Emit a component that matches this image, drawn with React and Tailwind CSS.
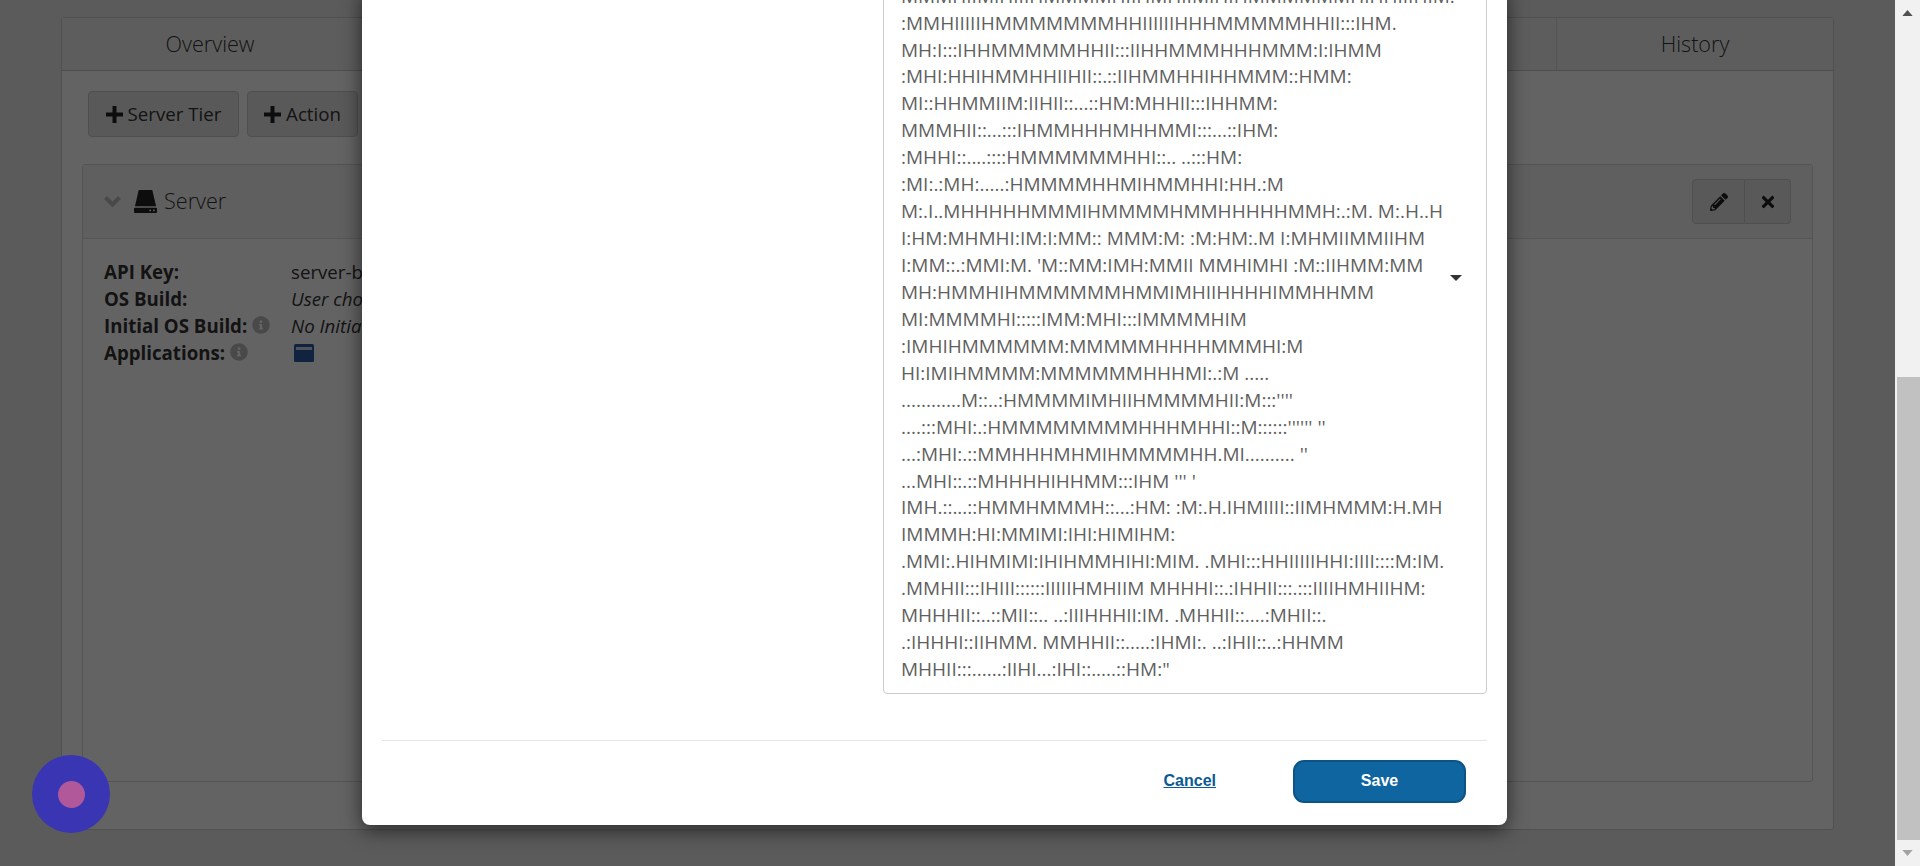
import { FaPencilAlt, FaTimes, FaInfoCircle } from 'react-icons/fa'

const SHEEP = [
  'MMMHIIMIHIIIHMMMMHIIHMHIIMIHIHMMMMMMHIHHIIIHIM:',
  ':MMHIIIIIHMMMMMMMHHIIIIIIHHHMMMMMHHII:::IHM.',
  'MH:I:::IHHMMMMMHHII:::IIHHMMMHHHMMM:I:IHMM',
  ':MHI:HHIHMMHHIIHII::.::IIHMMHHIHHMMM::HMM:',
  'MI::HHMMIIM:IIHII::...::HM:MHHII:::IHHMM:',
  'MMMHII::...:::IHMMHHHMHHMMI:::...::IHM:',
  ':MHHI::....::::HMMMMMMHHI::.. ..:::HM:',
  ':MI:.:MH:.....:HMMMMHHMIHMMHHI:HH.:M',
  'M:.I..MHHHHHMMMIHMMMMHMMHHHHHMMH:.:M. M:.H..H',
  'I:HM:MHMHI:IM:I:MM:: MMM:M: :M:HM:.M I:MHMIIMMIIHM',
  "I:MM::.:MMI:M. 'M::MM:IMH:MMII MMHIMHI :M::IIHMM:MM",
  'MH:HMMHIHMMMMMMHMMIMHIIHHHHIMMHHMM',
  'MI:MMMMHI:::::IMM:MHI:::IMMMMHIM',
  ':IMHIHMMMMMM:MMMMMHHHHMMMHI:M',
  'HI:IMIHMMMM:MMMMMMHHHMI:.:M .....',
  "............M::..:HMMMMIMHIIHMMMMHII:M:::''''",
  "....:::MHI:.:HMMMMMMMMHHHMHHI::M::::::'''''' ''",
  "...:MHI:.::MMHHHMHMIHMMMMHH.MI.......... ''",
  "...MHI::.::MHHHHIHHMM:::IHM ''' '",
  'IMH.::...::HMMHMMMH::...:HM: :M:.H.IHMIIII::IIMHMMM:H.MH',
  'IMMMH:HI:MMIMI:IHI:HIMIHM:',
  '.MMI:.HIHMIMI:IHIHMMHIHI:MIM. .MHI:::HHIIIIIHHI:IIII::::M:IM.',
  '.MMHII:::IHIII::::::IIIIIHMHIIM MHHHI::.:IHHII:::.:::IIIIHMHIIHM:',
  'MHHHII::..::MII::.. ..:IIIHHHII:IM. .MHHII::....:MHII::.',
  '.:IHHHI::IIHMM. MMHHII::.....:IHMI:. ..:IHII::..:HHMM',
  'MHHII:::......:IIHI...:IHI::.....::HM:"',
]

const DETAILS = [
  { label: 'API Key:', value: 'server-build-key' },
  { label: 'OS Build:', value: 'User chooses', italic: true },
  { label: 'Initial OS Build:', value: 'No Initial OS Build', italic: true, info: true },
  { label: 'Applications:', app: true, info: true },
]

function PlusIcon() {
  return (
    <svg viewBox="0 0 17 17" className="w-[17px] h-[17px] fill-[#222]">
      <path d="M6.5 0h4v6.5H17v4h-6.5V17h-4v-6.5H0v-4h6.5z" />
    </svg>
  )
}

function ChevronIcon() {
  return (
    <svg viewBox="0 0 17 11" className="w-[17px] h-[11px] fill-none stroke-[#bbbbbb] stroke-[4]">
      <path d="M1.5 1.5l7 7 7-7" />
    </svg>
  )
}

function HddIcon() {
  return (
    <svg viewBox="0 0 22 22" className="w-[23px] h-[23px] fill-[#222]">
      <path d="M4.5 0h13l3.6 15.5H.9z" />
      <path fillRule="evenodd" d="M1 17h20a1 1 0 0 1 1 1v3a1 1 0 0 1-1 1H1a1 1 0 0 1-1-1v-3a1 1 0 0 1 1-1zm14.5 1.6a.9.9 0 1 0 0 1.8.9.9 0 0 0 0-1.8zm3.5 0a.9.9 0 1 0 0 1.8.9.9 0 0 0 0-1.8z" />
    </svg>
  )
}

function AppIcon() {
  return (
    <svg viewBox="0 0 20 18" className="w-[20px] h-[18px]">
      <rect width="20" height="18" rx="1.5" fill="#2a5aa8" />
      <rect x="2" y="3" width="16" height="3" fill="#cfd6e4" />
    </svg>
  )
}

export default function App() {
  return (
    <div className="relative h-[866px] w-full flex overflow-hidden bg-[#e9e9e9] font-['Open_Sans',sans-serif]">
      <div className="flex-1 min-w-0 pl-[61px] pr-[61px] pt-[17px]">
        <div className="h-[813px] flex flex-col bg-white border border-[#cfcfcf] rounded-[3px]">
          <div className="h-[53px] flex bg-[#f0f0f0] border-b border-[#c8c8c8] text-[#333] text-[21.6px] font-light">
            <div className="w-[296px] flex items-center justify-center">Overview</div>
            <div className="flex-1" />
            <div className="w-[277px] flex items-center justify-center border-l border-[#d8d8d8]">History</div>
          </div>

          <div className="flex-1 flex flex-col px-5 pt-5 pb-[47px]">
            <div className="flex gap-[8px] ml-[6px] mb-[27px] text-[18.7px] text-[#333]">
              <button className="h-[46px] w-[151px] flex items-center justify-center gap-[5px] bg-[#e6e6e6] border border-[#cccccc] rounded-[4px]">
                <PlusIcon /> Server Tier
              </button>
              <button className="h-[46px] w-[111px] flex items-center justify-center gap-[5px] bg-[#e6e6e6] border border-[#cccccc] rounded-[4px]">
                <PlusIcon /> Action
              </button>
            </div>

            <div className="flex-1 flex flex-col border border-[#d8d8d8] rounded-[3px]">
              <div className="h-[74px] flex items-center bg-[#f5f5f5] border-b border-[#dddddd] pl-[21px] pr-[21px]">
                <ChevronIcon />
                <span className="ml-[13px]"><HddIcon /></span>
                <span className="ml-[7px] text-[21.6px] font-light text-[#333]">Server</span>
                <div className="ml-auto flex text-[#222]">
                  <button className="h-[45px] w-[53px] flex items-center justify-center bg-[#e6e6e6] border border-[#cccccc] rounded-l-[4px]">
                    <FaPencilAlt size={18} />
                  </button>
                  <button className="h-[45px] w-[46px] flex items-center justify-center bg-[#e6e6e6] border border-l-0 border-[#cccccc] rounded-r-[4px]">
                    <FaTimes size={18} />
                  </button>
                </div>
              </div>

              <div className="pt-[19px] pl-[21px] text-[18.7px] leading-[27px] text-[#333]">
                {DETAILS.map(row => (
                  <div key={row.label} className="flex">
                    <div className="w-[187px] flex items-center gap-[5px] font-bold">
                      {row.label}
                      {row.info && <FaInfoCircle size={18} className="text-[#bbbbbb] -mt-[2px]" />}
                    </div>
                    {row.app ? (
                      <span className="ml-[3px] flex items-center"><AppIcon /></span>
                    ) : (
                      <span className={row.italic ? 'italic' : ''}>{row.value}</span>
                    )}
                  </div>
                ))}
              </div>
            </div>
          </div>
        </div>
      </div>

      {/* scrollbar */}
      <div className="w-[25px] flex flex-col bg-[#f1f1f1] relative z-20">
        <div className="h-[17px] mt-[4px] flex justify-center">
          <svg viewBox="0 0 12 7" className="w-[11px] h-[6px] mt-[6px] fill-[#505050]"><path d="M6 0l6 7H0z" /></svg>
        </div>
        <div className="mt-[356px] h-[463px] ml-[2px] bg-[#c1c1c1]" />
        <div className="flex-1 flex justify-center items-center">
          <svg viewBox="0 0 12 7" className="w-[11px] h-[6px] fill-[#a3a3a3]"><path d="M6 7l6-7H0z" /></svg>
        </div>
      </div>

      {/* backdrop */}
      <div className="absolute inset-0 bg-black/[0.61] z-10" />

      {/* modal, taller than the window and pinned to the bottom */}
      <div className="absolute z-10 left-[362px] bottom-[41px] w-[1145px] bg-white rounded-[8px] shadow-[0_5px_20px_rgba(0,0,0,0.6)] pl-[20px] pr-[20px]">
        <div className="flex justify-end mb-[46px]">
          <div className="relative w-[604px] h-[707px] border border-[#cccccc] rounded-[4px] pl-[17px] pb-[10px] flex flex-col justify-end text-[19px] leading-[26.93px] text-[#5f5f5f] whitespace-pre">
            {SHEEP.map((line, i) => <div key={i}>{line}</div>)}
            <span className="absolute right-[24px] top-[287px] border-x-[6px] border-x-transparent border-t-[6px] border-t-[#333]" />
          </div>
        </div>
        <div className="border-t border-[#e5e5e5] h-[85px] pb-[4px] flex items-center justify-end font-['Liberation_Sans',sans-serif] font-bold text-[16px]">
          <a className="underline text-[#0b5a94] mr-[77px]">Cancel</a>
          <button className="w-[173px] h-[43px] mr-[21px] bg-[#0f659f] border-2 border-[#0c5485] rounded-[11px] text-white">Save</button>
        </div>
      </div>

      {/* chat launcher */}
      <div className="absolute z-30 left-[32px] bottom-[33px] w-[78px] h-[78px] rounded-full bg-[#3a35b2] flex items-center justify-center">
        <div className="w-[27px] h-[27px] rounded-full bg-[#b0589a]" />
      </div>
    </div>
  )
}
